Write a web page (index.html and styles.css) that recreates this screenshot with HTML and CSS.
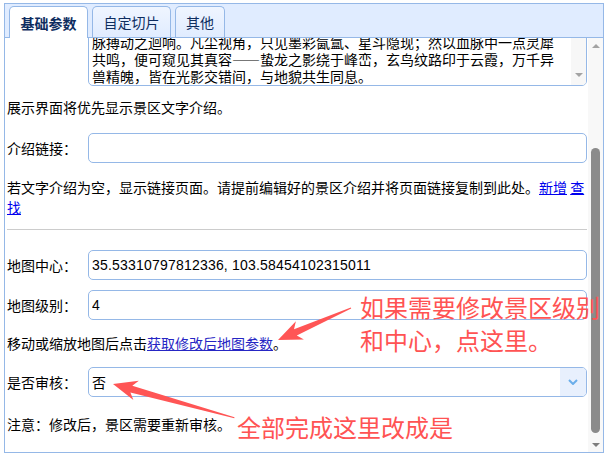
FILE: index.html
```html
<!DOCTYPE html>
<html lang="zh-CN">
<head>
  <meta charset="UTF-8" />
  <title>景区参数</title>
  <link rel="stylesheet" href="styles.css">
</head>
<body>

<div class="panel">
  <div class="tabs">
    <div class="tab active">基础参数</div>
    <div class="tab">自定切片</div>
    <div class="tab small">其他</div>
  </div>
  <div class="panel-body">
    <div class="form">
      <div class="textarea">
        <div class="ta-text">
          <div>脉搏动之迴响。凡尘视角，只见墨彩氤氲、星斗隐现；然以血脉中一点灵犀</div>
          <div>共鸣，便可窥见其真容——蛰龙之影绕于峰峦，玄鸟纹路印于云霞，万千异</div>
          <div>兽精魄，皆在光影交错间，与地貌共生同息。</div>
        </div>
        <div class="ta-scroll"><span class="tri-down"></span></div>
      </div>

      <p class="note n1">展示界面将优先显示景区文字介绍。</p>

      <div class="field f1">
        <label for="link">介绍链接：</label>
        <input type="text" id="link" class="input" value="" />
      </div>

      <p class="note n2">若文字介绍为空，显示链接页面。请提前编辑好的景区介绍并将页面链接复制到此处。<a href="#">新增</a> <a href="#">查找</a></p>

      <hr>

      <div class="field f2">
        <label for="center">地图中心：</label>
        <input type="text" id="center" class="input num" value="35.53310797812336, 103.58454102315011" />
      </div>
      <div class="field f3">
        <label for="zoom">地图级别：</label>
        <input type="text" id="zoom" class="input num" value="4" />
      </div>

      <p class="note n3">移动或缩放地图后点击<a href="#" class="map-link">获取修改后地图参数</a>。</p>

      <div class="field f4">
        <label>是否审核：</label>
        <div class="select">
          <span class="select-value">否</span>
          <span class="select-arrow">
            <svg width="10" height="6" viewBox="0 0 10 6"><path d="M1 1 L5 5 L9 1" fill="none" stroke="#6aaeea" stroke-width="2"/></svg>
          </span>
        </div>
      </div>

      <p class="note n4">注意：修改后，景区需要重新审核。</p>
    </div>

    <div class="scrollbar">
      <div class="sb-btn"><span class="tri-up"></span></div>
      <div class="sb-track"><div class="sb-thumb"></div></div>
      <div class="sb-btn"><span class="tri-down dark"></span></div>
    </div>
  </div>
</div>

<!-- annotations drawn over the screenshot -->
<div class="callout c1">如果需要修改景区级别<br>和中心，点这里。</div>
<div class="callout c2">全部完成这里改成是</div>
<svg class="arrows" width="614" height="463" viewBox="0 0 614 463">
  <polygon points="278,340 295.9,321.3 294,329.2 350.8,307.5 351.2,308.5 296.8,335.6 303.9,339.5" fill="#ff5555"/>
  <polygon points="113,384 138.8,380.8 132.3,385.7 234.5,417.3 234.3,418.3 130.4,392.5 133.4,400.1" fill="#ff5555"/>
</svg>

</body>
</html>
```

FILE: styles.css
```css
* {
  box-sizing: border-box;
}
body {
  margin: 0;
  font-family: "Noto Sans CJK SC", sans-serif;
  font-size: 14px;
  color: #000;
}
.panel {
  width: 600px;
  height: 450px;
  margin: 3px 0 0 4px;
  border: 1px solid #95b8e7;
  display: flex;
  flex-direction: column;
}

/* tabs */
.tabs {
  height: 34px;
  flex-shrink: 0;
  display: flex;
  gap: 4px;
  padding: 2px 0 0 4px;
  background: #e0ecff;
  border-bottom: 1px solid #95b8e7;
}
.tab {
  width: 79px;
  display: flex;
  align-items: center;
  justify-content: center;
  border: 1px solid #95b8e7;
  border-bottom: 0;
  border-radius: 5px 5px 0 0;
  background: linear-gradient(#eff5ff, #e0ecff);
  color: #0e2d5f;
}
.tab.small {
  width: 50px;
}
.tab.active {
  background: #fff;
  font-weight: bold;
  margin-bottom: -1px;
}

/* body */
.panel-body {
  flex: 1;
  min-height: 0;
  display: flex;
}
.form {
  flex: 1;
  overflow: hidden;
  padding: 0 1px 0 2px;
}

.textarea {
  height: 54px;
  margin: -6px 0 0 81px;
  border: 1px solid #95b8e7;
  border-radius: 5px;
  overflow: hidden;
  display: flex;
}
.ta-text {
  flex: 1;
  padding: 1px 0 0 3px;
  line-height: 17px;
  white-space: nowrap;
  overflow: hidden;
}
.ta-scroll {
  width: 15px;
  background: #f7f7f7;
  display: flex;
  flex-direction: column;
  justify-content: flex-end;
  align-items: center;
  padding-bottom: 8px;
}

.note {
  margin: 0;
  line-height: 20px;
}
.n1 { margin-top: 11px; }
.n2 { margin-top: 14px; }
.n3 { margin-top: 13px; }
.n4 { margin-top: 17px; }
.note a {
  color: #0000ee;
}
.note .map-link {
  color: #2626c4;
}

hr {
  margin: 12px 0 0;
  height: 0;
  border: 0;
  border-top: 1px solid #ccc;
}

.field {
  display: flex;
  align-items: center;
}
.f1 { margin-top: 16px; }
.f2 { margin-top: 20px; }
.f3 { margin-top: 10px; }
.f4 { margin-top: 14px; }
.field label {
  width: 81px;
  flex-shrink: 0;
}
.input {
  flex: 1;
  height: 30px;
  margin: 0;
  padding: 0 3px;
  border: 1px solid #95b8e7;
  border-radius: 5px;
  outline: none;
  font-family: "Noto Sans CJK SC", sans-serif;
  font-size: 14px;
  color: #000;
}
.input.num {
  font-family: "Liberation Sans", "Noto Sans CJK SC", sans-serif;
  letter-spacing: 0.2px;
}

.select {
  flex: 1;
  height: 30px;
  display: flex;
  border: 1px solid #95b8e7;
  border-radius: 5px;
  overflow: hidden;
}
.select-value {
  flex: 1;
  padding-left: 3px;
  line-height: 28px;
}
.select-arrow {
  width: 26px;
  background: #e8f0fd;
  display: flex;
  align-items: center;
  justify-content: center;
}

/* fake scrollbar */
.scrollbar {
  width: 15px;
  flex-shrink: 0;
  display: flex;
  flex-direction: column;
  background: #f8f8f8;
}
.sb-btn {
  height: 15px;
  display: flex;
  align-items: center;
  justify-content: center;
}
.sb-track {
  flex: 1;
  padding: 95px 0 0 3px;
}
.sb-thumb {
  width: 9px;
  height: 285px;
  border-radius: 5px;
  background: #8b8b8b;
}
.tri-up {
  width: 0;
  height: 0;
  border-left: 4px solid transparent;
  border-right: 4px solid transparent;
  border-bottom: 4px solid #a3a3a3;
}
.tri-down {
  width: 0;
  height: 0;
  border-left: 4px solid transparent;
  border-right: 4px solid transparent;
  border-top: 4px solid #a3a3a3;
}
.tri-down.dark {
  border-top-color: #7d7d7d;
}

/* annotations */
.callout {
  position: absolute;
  color: #ff5353;
  font-family: "Noto Sans CJK SC", sans-serif;
  font-size: 24px;
  line-height: 33px;
  white-space: nowrap;
}
.c1 {
  left: 360px;
  top: 290px;
}
.c2 {
  left: 237px;
  top: 410px;
}
.arrows {
  position: absolute;
  left: 0;
  top: 0;
  pointer-events: none;
}
```
